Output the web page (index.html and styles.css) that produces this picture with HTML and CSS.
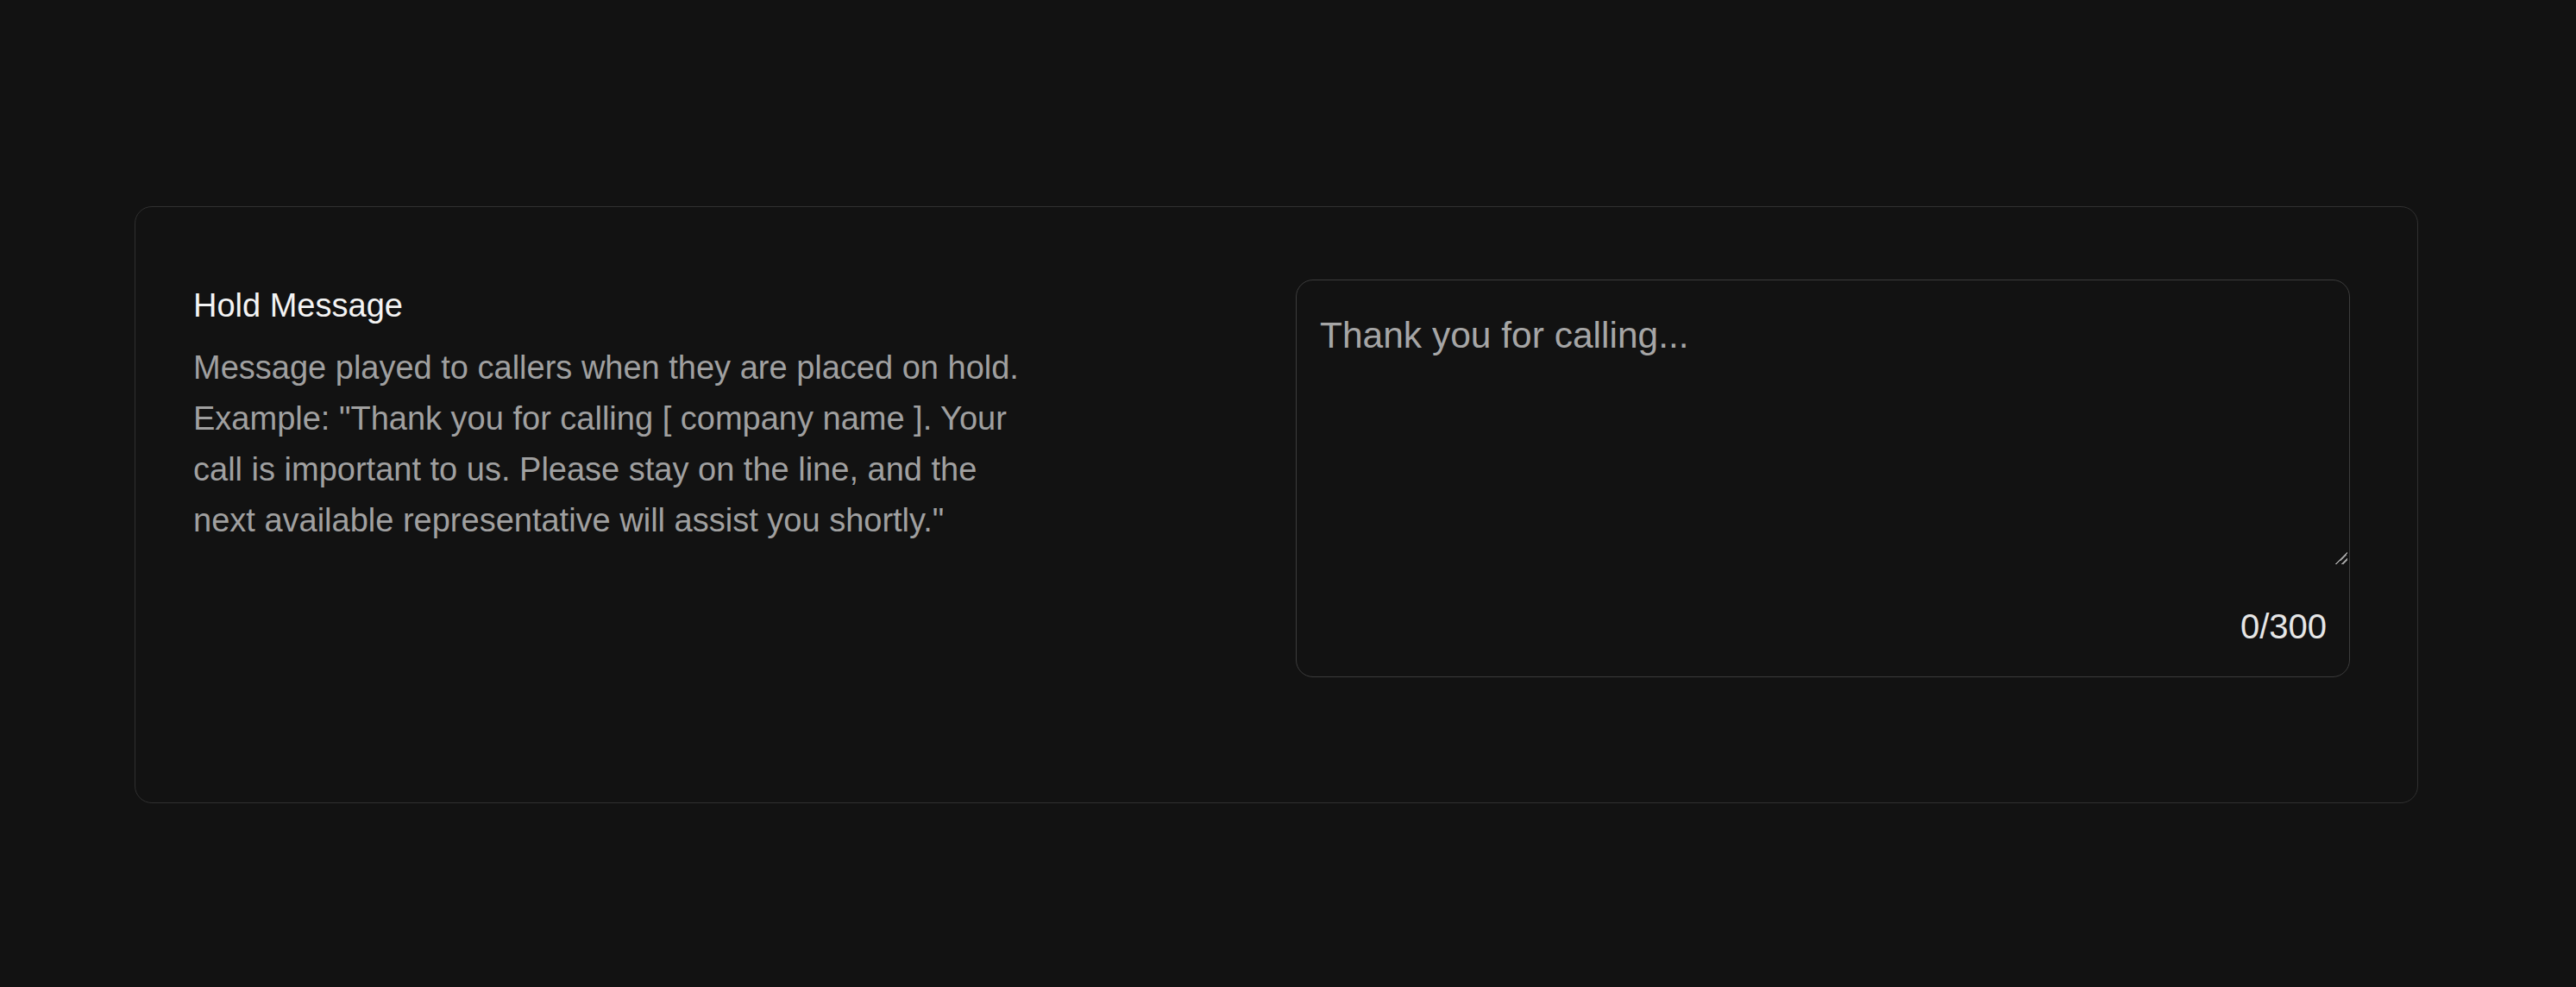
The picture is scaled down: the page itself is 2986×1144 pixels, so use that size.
FILE: index.html
```html
<!DOCTYPE html>
<html lang="en">
<head>
<meta charset="utf-8">
<title>Hold Message</title>
<link rel="stylesheet" href="styles.css">
</head>
<body>
<main class="page">
  <section class="card">
    <div class="info">
      <h2 class="title">Hold Message</h2>
      <p class="desc">Message played to callers when they are placed on hold. Example: "Thank you for calling [ company name ]. Your call is important to us. Please stay on the line, and the next available representative will assist you shortly."</p>
    </div>
    <div class="field">
      <textarea class="input" placeholder="Thank you for calling..." maxlength="300"></textarea>
      <div class="counter">0/300</div>
    </div>
  </section>
</main>
</body>
</html>
```

FILE: styles.css
```css
html, body {
  margin: 0;
  padding: 0;
  background: #121212;
}

body {
  font-family: "Liberation Sans", Arial, sans-serif;
  color: #f2f2f2;
}

.page {
  padding: 239px 0 0 156px;
}

.card {
  box-sizing: border-box;
  width: 2647px;
  border: 1px solid #303030;
  border-radius: 20px;
  padding: 84px 78px 145px 65px;
  display: grid;
  grid-template-columns: 1fr 1fr;
  column-gap: 58px;
  align-items: start;
}

.info {
  margin-top: 6px;
  padding-left: 2px;
}

.title {
  margin: 0;
  font-size: 38px;
  line-height: 48px;
  font-weight: 400;
  color: #f4f4f4;
}

.desc {
  margin: 19px 0 0;
  max-width: 965px;
  font-size: 38px;
  line-height: 59px;
  color: #a0a0a0;
}

.field {
  box-sizing: border-box;
  border: 1px solid #3c3c3c;
  border-radius: 20px;
  padding: 2px 2px 30px;
  display: flex;
  flex-direction: column;
}

.input {
  box-sizing: border-box;
  display: block;
  width: 100%;
  height: 327px;
  margin: 0;
  padding: 32px 25px 0;
  border: none;
  outline: none;
  background: transparent;
  color: #e8e8e8;
  color-scheme: dark;
  font-family: "Liberation Sans", Arial, sans-serif;
  font-size: 42.5px;
  line-height: 60px;
  resize: vertical;
}

.input::placeholder {
  color: #a6a6a6;
  opacity: 1;
}

.input::-webkit-resizer {
  background: linear-gradient(135deg,
    transparent 0 52%,
    #9a9a9a 52% 60%,
    transparent 60% 76%,
    #9a9a9a 76% 84%,
    transparent 84%);
}

.counter {
  margin-top: 44px;
  padding: 0 24px;
  text-align: right;
  font-size: 40px;
  line-height: 56px;
  color: #e6e6e6;
}
```
